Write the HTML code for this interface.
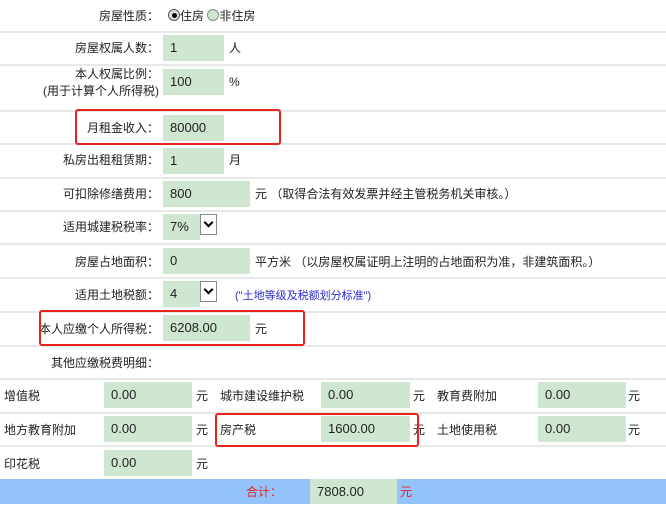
<!DOCTYPE html><html><head><meta charset="utf-8"><style>
body{margin:0;width:666px;height:508px;background:#fff;font-family:"Liberation Sans","Noto Sans CJK SC",sans-serif;font-size:12px;line-height:16px;color:#222;position:relative;overflow:hidden}
.a{position:absolute;white-space:nowrap}
.l{position:absolute;right:507px;text-align:right;white-space:nowrap}
.in{position:absolute;background:#cfe6d1;height:26px;line-height:26px;padding-left:7px;box-sizing:border-box;color:#222;font-size:13px}
.hr{position:absolute;left:0;width:666px;height:2px;background:#e8e8e8}
.rb{position:absolute;border:2px solid #e8231e;border-radius:3px;box-sizing:border-box}
.sel{position:absolute;width:17px;height:21px;border:1px solid #888;background:#fff;box-sizing:border-box}
.sel:after{content:"";position:absolute;left:4px;top:4px;width:5px;height:5px;border-right:2px solid #000;border-bottom:2px solid #000;transform:rotate(45deg)}
</style></head><body>
<div class="hr" style="top:31px"></div><div class="hr" style="top:64px"></div><div class="hr" style="top:110px"></div><div class="hr" style="top:143px"></div><div class="hr" style="top:177px"></div><div class="hr" style="top:210px"></div><div class="hr" style="top:243px"></div><div class="hr" style="top:277px"></div><div class="hr" style="top:311px"></div><div class="hr" style="top:345px"></div><div class="hr" style="top:378px"></div><div class="hr" style="top:412px"></div><div class="hr" style="top:445px"></div>

<div class="l" style="top:8px">房屋性质：</div>
<div class="a" style="left:168px;top:8px"><span style="display:inline-block;width:10px;height:10px;border:1px solid #555;border-radius:50%;background:#ddd;vertical-align:-1px;position:relative"><span style="position:absolute;left:3px;top:3px;width:5px;height:5px;border-radius:50%;background:#000"></span></span>住房 <span style="display:inline-block;width:10px;height:10px;border:1px solid #888;border-radius:50%;background:#cfe6d1;vertical-align:-1px"></span>非住房</div>

<div class="l" style="top:40px">房屋权属人数：</div>
<div class="in" style="left:163px;top:35px;width:61px">1</div><div class="a" style="left:229px;top:40px">人</div>

<div class="l" style="top:66px;line-height:17px">本人权属比例：<br>(用于计算个人所得税)</div>
<div class="in" style="left:163px;top:69px;width:61px">100</div><div class="a" style="left:229px;top:74px">%</div>

<div class="l" style="top:120px">月租金收入：</div>
<div class="in" style="left:163px;top:115px;width:61px">80000</div>
<div class="rb" style="left:75px;top:109px;width:206px;height:36px"></div>

<div class="l" style="top:152px">私房出租租赁期：</div>
<div class="in" style="left:163px;top:148px;width:61px">1</div><div class="a" style="left:229px;top:152px">月</div>

<div class="l" style="top:186px">可扣除修缮费用：</div>
<div class="in" style="left:163px;top:181px;width:87px">800</div><div class="a" style="left:255px;top:186px">元 （取得合法有效发票并经主管税务机关审核。）</div>

<div class="l" style="top:219px">适用城建税税率：</div>
<div class="in" style="left:163px;top:214px;width:37px">7%</div><div class="sel" style="left:200px;top:214px"></div>

<div class="l" style="top:254px">房屋占地面积：</div>
<div class="in" style="left:163px;top:248px;width:87px">0</div><div class="a" style="left:255px;top:254px">平方米 （以房屋权属证明上注明的占地面积为准，非建筑面积。）</div>

<div class="l" style="top:287px">适用土地税额：</div>
<div class="in" style="left:163px;top:281px;width:37px">4</div><div class="sel" style="left:200px;top:281px"></div>
<div class="a" style="left:235px;top:288px;font-size:11px;color:#2a2ad0">("土地等级及税额划分标准")</div>

<div class="l" style="top:321px">本人应缴个人所得税：</div>
<div class="in" style="left:163px;top:315px;width:87px">6208.00</div><div class="a" style="left:255px;top:321px">元</div>
<div class="rb" style="left:39px;top:310px;width:266px;height:36px"></div>

<div class="l" style="top:355px">其他应缴税费明细：</div>

<div class="a" style="left:4px;top:388px">增值税</div><div class="in" style="left:104px;top:382px;width:88px">0.00</div><div class="a" style="left:196px;top:388px">元</div>
<div class="a" style="left:220px;top:388px">城市建设维护税</div><div class="in" style="left:321px;top:382px;width:89px">0.00</div><div class="a" style="left:413px;top:388px">元</div>
<div class="a" style="left:437px;top:388px">教育费附加</div><div class="in" style="left:538px;top:382px;width:88px">0.00</div><div class="a" style="left:628px;top:388px">元</div>

<div class="a" style="left:4px;top:422px">地方教育附加</div><div class="in" style="left:104px;top:416px;width:88px">0.00</div><div class="a" style="left:196px;top:422px">元</div>
<div class="a" style="left:220px;top:422px">房产税</div><div class="in" style="left:321px;top:416px;width:89px">1600.00</div><div class="a" style="left:413px;top:422px">元</div>
<div class="a" style="left:437px;top:422px">土地使用税</div><div class="in" style="left:538px;top:416px;width:88px">0.00</div><div class="a" style="left:628px;top:422px">元</div>
<div class="rb" style="left:215px;top:413px;width:204px;height:34px"></div>

<div class="a" style="left:4px;top:456px">印花税</div><div class="in" style="left:104px;top:450px;width:88px">0.00</div><div class="a" style="left:196px;top:456px">元</div>

<div style="position:absolute;left:0;top:479px;width:666px;height:25px;background:#93c3f8"></div>
<div class="a" style="left:246px;top:484px;color:#e8231e">合计：</div>
<div class="in" style="left:310px;top:479px;width:87px;height:25px;line-height:25px">7808.00</div>
<div class="a" style="left:400px;top:484px;color:#e8231e">元</div>
</body></html>
